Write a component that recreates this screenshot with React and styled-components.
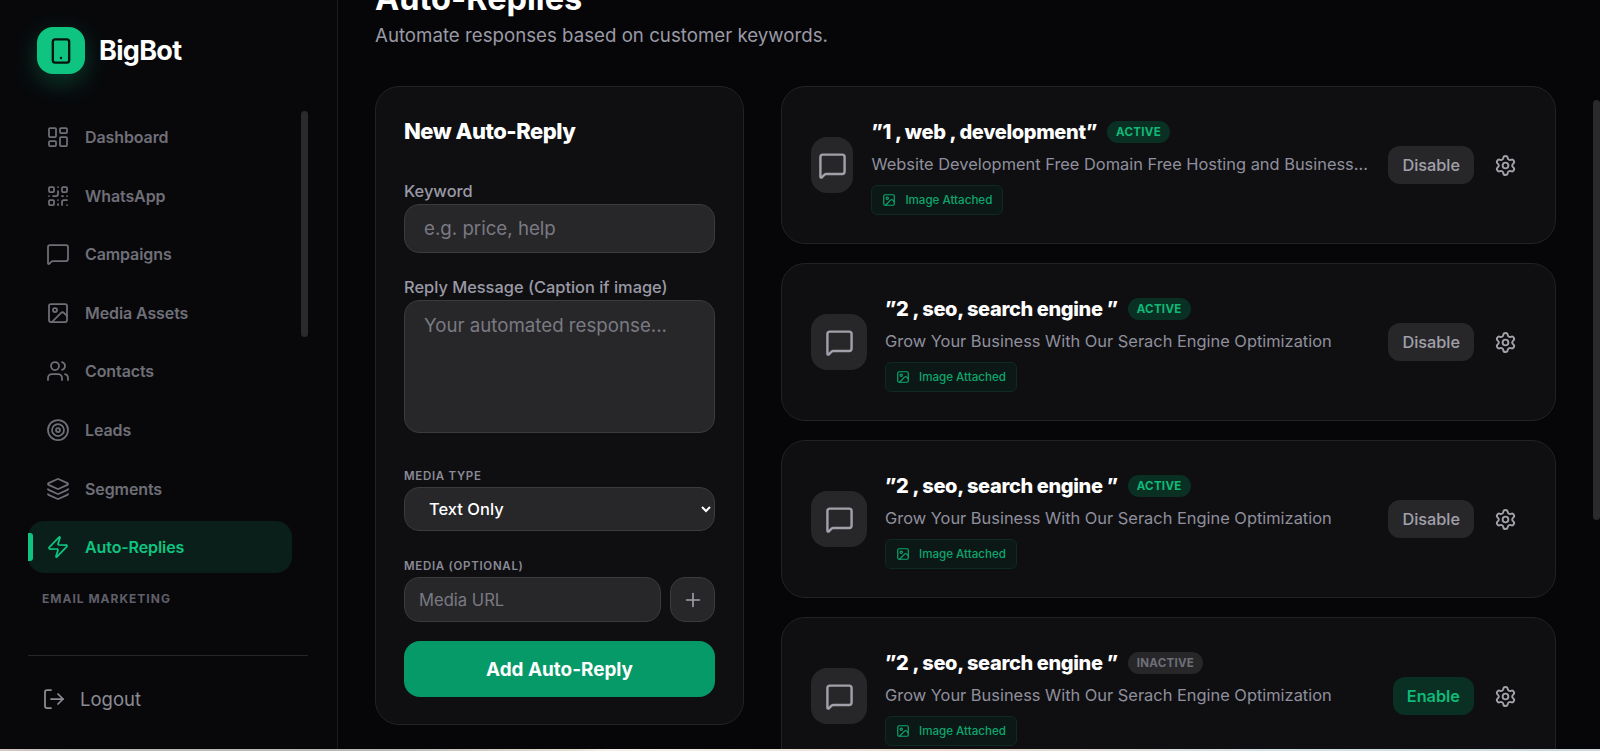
import React from "react";
import styled, { createGlobalStyle } from "styled-components";
import {
  LayoutDashboard,
  QrCode,
  MessageSquare,
  Image as ImageIcon,
  Users,
  Target,
  Layers,
  Zap,
  LogOut,
  Smartphone,
  Plus,
  Settings,
} from "lucide-react";

const navItems = [
  { id: "dashboard", label: "Dashboard", icon: LayoutDashboard },
  { id: "whatsapp", label: "WhatsApp", icon: QrCode },
  { id: "campaigns", label: "Campaigns", icon: MessageSquare },
  { id: "media", label: "Media Assets", icon: ImageIcon },
  { id: "contacts", label: "Contacts", icon: Users },
  { id: "leads", label: "Leads", icon: Target },
  { id: "segments", label: "Segments", icon: Layers },
  { id: "auto", label: "Auto-Replies", icon: Zap, active: true },
];

const replies = [
  {
    id: 1,
    keyword: "”1 , web , development”",
    text: "Website Development Free Domain Free Hosting and Business Email Included With Every Plan",
    active: true,
  },
  {
    id: 2,
    keyword: "”2 , seo, search engine ”",
    text: "Grow Your Business With Our Serach Engine Optimization",
    active: true,
  },
  {
    id: 3,
    keyword: "”2 , seo, search engine ”",
    text: "Grow Your Business With Our Serach Engine Optimization",
    active: true,
  },
  {
    id: 4,
    keyword: "”2 , seo, search engine ”",
    text: "Grow Your Business With Our Serach Engine Optimization",
    active: false,
  },
];

const App = () => {
  return (
    <>
      <GlobalStyle />
      <Shell>
        <Sidebar>
          <Brand>
            <LogoMark>
              <Smartphone size={28} strokeWidth={2} />
            </LogoMark>
            <BrandName>BigBot</BrandName>
          </Brand>

          <Nav>
            <NavThumb />
            {navItems.map((item) => {
              const Icon = item.icon;
              return (
                <NavItem key={item.id} $active={item.active}>
                  <Icon size={24} strokeWidth={1.75} />
                  {item.label}
                </NavItem>
              );
            })}
            <NavHeading>EMAIL MARKETING</NavHeading>
          </Nav>

          <SidebarFooter>
            <LogoutButton>
              <LogOut size={24} strokeWidth={1.75} />
              Logout
            </LogoutButton>
          </SidebarFooter>
        </Sidebar>

        <Main>
          <MainThumb />
          <Title>Auto-Replies</Title>
          <Subtitle>Automate responses based on customer keywords.</Subtitle>

          <Columns>
            <FormPanel>
              <PanelTitle>New Auto-Reply</PanelTitle>

              <Label>Keyword</Label>
              <TextInput placeholder="e.g. price, help" />

              <Label $top={24}>Reply Message (Caption if image)</Label>
              <TextArea placeholder="Your automated response..." />

              <CapsLabel $top={35}>MEDIA TYPE</CapsLabel>
              <Select defaultValue="text">
                <option value="text">Text Only</option>
                <option value="image">Image</option>
              </Select>

              <CapsLabel $top={27}>MEDIA (OPTIONAL)</CapsLabel>
              <MediaRow>
                <MediaInput placeholder="Media URL" />
                <AddMedia>
                  <Plus size={22} strokeWidth={1.75} />
                </AddMedia>
              </MediaRow>

              <SubmitButton>Add Auto-Reply</SubmitButton>
            </FormPanel>

            <ReplyList>
              {replies.map((reply) => (
                <ReplyCard key={reply.id}>
                  <ReplyLeft>
                    <ReplyIcon>
                      <MessageSquare size={29} strokeWidth={2} />
                    </ReplyIcon>
                    <ReplyInfo>
                      <ReplyHead>
                        <Keyword>{reply.keyword}</Keyword>
                        <Badge $active={reply.active}>
                          {reply.active ? "ACTIVE" : "INACTIVE"}
                        </Badge>
                      </ReplyHead>
                      <ReplyText>{reply.text}</ReplyText>
                      <Attachment>
                        <ImageIcon size={14} strokeWidth={2} />
                        Image Attached
                      </Attachment>
                    </ReplyInfo>
                  </ReplyLeft>
                  <ReplyActions>
                    <ToggleButton $enable={!reply.active}>
                      {reply.active ? "Disable" : "Enable"}
                    </ToggleButton>
                    <GearButton>
                      <Settings size={23} strokeWidth={2} />
                    </GearButton>
                  </ReplyActions>
                </ReplyCard>
              ))}
            </ReplyList>
          </Columns>
        </Main>
      </Shell>
      <BottomEdge />
    </>
  );
};

const GlobalStyle = createGlobalStyle`
  * {
    box-sizing: border-box;
  }
  html, body {
    margin: 0;
    height: 100%;
    overflow: hidden;
    background: #060608;
    font-family: Inter, "Liberation Sans", sans-serif;
    color-scheme: dark;
  }
`;

const Shell = styled.div`
  display: flex;
  height: 749px;
  overflow: hidden;
`;

const BottomEdge = styled.div`
  height: 2px;
  background: linear-gradient(90deg, #d9c9c4 0, #bdbdb9 4%, #b9b9b5 24%, #e6e0d2 36%, #f4f1ea 38%, #eadbcf 60%, #d5e2e6 80%, #cfd9dc 100%);
`;

const Sidebar = styled.aside`
  width: 338px;
  flex: none;
  display: flex;
  flex-direction: column;
  padding: 27px 29px 0 28px;
  background: #08080b;
  border-right: 1px solid #1c1c20;
`;

const Brand = styled.div`
  display: flex;
  align-items: center;
  gap: 14px;
  padding-left: 9px;
`;

const LogoMark = styled.div`
  width: 48px;
  height: 47px;
  display: grid;
  place-items: center;
  border-radius: 16px;
  background: #0ec480;
  color: #08120e;
  box-shadow: 0 8px 24px rgba(16, 196, 130, 0.28);
`;

const BrandName = styled.span`
  font-size: 27px;
  font-weight: 700;
  letter-spacing: -0.7px;
  color: #fff;
`;

const Nav = styled.nav`
  position: relative;
  flex: 1;
  margin-top: 37px;
  display: flex;
  flex-direction: column;
  gap: 6.6px;
`;

const NavThumb = styled.div`
  position: absolute;
  top: 0;
  right: 0;
  width: 7px;
  height: 226px;
  border-radius: 4px;
  background: #2a2a2d;
`;

const NavItem = styled.a`
  position: relative;
  width: 264px;
  height: 52px;
  flex: none;
  display: flex;
  align-items: center;
  gap: 15px;
  padding-left: 18px;
  border-radius: 16px;
  font-size: 16px;
  font-weight: 600;
  letter-spacing: -0.1px;
  color: ${(p) => (p.$active ? "#0ec480" : "#6f6f78")};
  background: ${(p) => (p.$active ? "#0a1f1a" : "transparent")};

  &::before {
    content: "";
    display: ${(p) => (p.$active ? "block" : "none")};
    position: absolute;
    left: 0;
    top: 12px;
    width: 5px;
    height: 28px;
    border-radius: 0 3px 3px 0;
    background: #0ec480;
  }
`;

const NavHeading = styled.div`
  margin: 11px 0 0 14px;
  font-size: 12px;
  line-height: 16px;
  font-weight: 700;
  letter-spacing: 1px;
  color: #5f5f68;
`;

const SidebarFooter = styled.div`
  height: 94px;
  flex: none;
  padding: 31px 0 0 14px;
  border-top: 1px solid #26262a;
`;

const LogoutButton = styled.a`
  display: flex;
  align-items: center;
  gap: 14px;
  font-size: 18.5px;
  color: #8c8c94;
`;

const Main = styled.main`
  position: relative;
  flex: 1;
  min-width: 0;
  overflow: hidden;
  padding: 0 44px 0 37px;
`;

const MainThumb = styled.div`
  position: absolute;
  top: 100px;
  right: 0;
  width: 7px;
  height: 420px;
  border-radius: 4px;
  background: #2a2a2d;
`;

const Title = styled.h1`
  margin: -21px 0 0;
  font-size: 32.5px;
  line-height: 40px;
  font-weight: 700;
  color: #fff;
`;

const Subtitle = styled.p`
  margin: 4px 0 0;
  font-size: 18.7px;
  line-height: 26px;
  color: #9a9aa6;
`;

const Columns = styled.div`
  margin-top: 37px;
  display: grid;
  grid-template-columns: 369px minmax(0, 1fr);
  gap: 37px;
  align-items: start;
`;

const FormPanel = styled.section`
  display: flex;
  flex-direction: column;
  padding: 30px 28px 27px;
  border: 1px solid #222226;
  border-radius: 24px;
  background: #0f0f11;
`;

const PanelTitle = styled.h2`
  margin: 0 0 36px;
  font-size: 22px;
  line-height: 28px;
  font-weight: 800;
  letter-spacing: -0.5px;
  color: #fff;
`;

const Label = styled.label`
  margin: ${(p) => p.$top || 0}px 0 3px;
  font-size: 16.4px;
  line-height: 20px;
  font-weight: 500;
  color: #9a9aa6;
`;

const CapsLabel = styled.label`
  margin: ${(p) => p.$top || 0}px 0 3px;
  font-size: 11.5px;
  line-height: 16px;
  font-weight: 600;
  letter-spacing: 0.7px;
  color: #8a8a96;
`;

const TextInput = styled.input`
  height: 49px;
  flex: none;
  padding: 0 19px;
  border: 1px solid #3a3a3f;
  border-radius: 15px;
  outline: none;
  background: #27272a;
  font: 400 18.7px Inter, sans-serif;
  color: #fff;

  &::placeholder {
    color: #7a7a82;
  }
`;

const TextArea = styled.textarea`
  height: 133px;
  flex: none;
  padding: 12px 19px;
  border: 1px solid #3a3a3f;
  border-radius: 15px;
  outline: none;
  resize: none;
  background: #27272a;
  font: 400 18.7px/26px Inter, sans-serif;
  color: #fff;

  &::placeholder {
    color: #7a7a82;
  }
`;

const Select = styled.select`
  height: 44px;
  flex: none;
  padding: 0 6px 0 20px;
  border: 1px solid #3a3a3f;
  border-radius: 15px;
  outline: none;
  background: #27272a;
  font: 500 16.5px Inter, sans-serif;
  color: #fff;
`;

const MediaRow = styled.div`
  display: flex;
  gap: 9px;
`;

const MediaInput = styled(TextInput)`
  flex: 1;
  min-width: 0;
  height: 45px;
  padding: 0 14px;
  font-size: 16.6px;
`;

const AddMedia = styled.button`
  width: 45px;
  height: 45px;
  flex: none;
  display: grid;
  place-items: center;
  padding: 0;
  border: 1px solid #3a3a3f;
  border-radius: 15px;
  background: #27272a;
  color: #a1a1aa;
`;

const SubmitButton = styled.button`
  height: 56px;
  flex: none;
  margin-top: 19px;
  border: none;
  border-radius: 16px;
  background: #059a68;
  font: 700 18.9px Inter, sans-serif;
  color: #fff;
`;

const ReplyList = styled.div`
  display: flex;
  flex-direction: column;
  gap: 19px;
`;

const ReplyCard = styled.article`
  height: 158px;
  flex: none;
  display: flex;
  align-items: center;
  justify-content: space-between;
  gap: 19px;
  padding: 0 30px 0 29px;
  border: 1px solid #222226;
  border-radius: 24px;
  background: #0f0f11;
`;

const ReplyLeft = styled.div`
  flex: 1;
  min-width: 0;
  display: flex;
  align-items: center;
  gap: 18px;
`;

const ReplyIcon = styled.div`
  width: 56px;
  height: 56px;
  flex: 0 1 56px;
  min-width: 0;
  display: grid;
  place-items: center;
  border-radius: 16px;
  background: #27272a;
  color: #a1a1aa;
`;

const ReplyInfo = styled.div`
  flex: none;
  max-width: 498px;
  padding-top: 3px;
  display: flex;
  flex-direction: column;
  align-items: flex-start;
`;

const ReplyHead = styled.div`
  display: flex;
  align-items: center;
  gap: 10px;
`;

const Keyword = styled.h3`
  margin: 0;
  font-size: 20px;
  line-height: 28px;
  font-weight: 800;
  letter-spacing: -0.35px;
  color: #fff;
`;

const Badge = styled.span`
  height: 22px;
  display: flex;
  align-items: center;
  padding: 0 9px;
  border-radius: 11px;
  font-size: 11.5px;
  font-weight: 700;
  letter-spacing: 0.3px;
  color: ${(p) => (p.$active ? "#10b978" : "#6f6f78")};
  background: ${(p) => (p.$active ? "#0a3024" : "#27272a")};
`;

const ReplyText = styled.p`
  max-width: 100%;
  margin: 6px 0 9px;
  overflow: hidden;
  white-space: nowrap;
  text-overflow: ellipsis;
  font-size: 16.4px;
  line-height: 24px;
  color: #8f8f9e;
`;

const Attachment = styled.div`
  height: 30px;
  display: flex;
  align-items: center;
  gap: 9px;
  padding: 0 10px;
  border: 1px solid #0f2a22;
  border-radius: 6px;
  background: #0b1815;
  font-size: 11.6px;
  font-weight: 500;
  color: #0ea66e;
`;

const ReplyActions = styled.div`
  flex: none;
  display: flex;
  align-items: center;
  gap: 11px;
`;

const ToggleButton = styled.button`
  height: 38px;
  padding: 0 14px;
  border: none;
  border-radius: 12px;
  background: ${(p) => (p.$enable ? "#0a3024" : "#27272a")};
  font: ${(p) => (p.$enable ? 600 : 500)} 16.3px Inter, sans-serif;
  color: ${(p) => (p.$enable ? "#10b978" : "#a1a1aa")};
`;

const GearButton = styled.button`
  width: 40px;
  height: 40px;
  display: grid;
  place-items: center;
  padding: 0;
  border: none;
  background: transparent;
  color: #a1a1aa;
`;

export default App;
